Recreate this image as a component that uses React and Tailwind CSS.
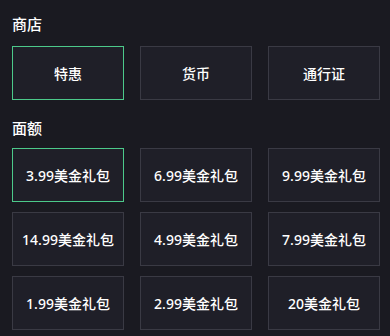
import React, { useState } from 'react';

const TABS = ['特惠', '货币', '通行证'];
const AMOUNTS = [
  '3.99美金礼包', '6.99美金礼包', '9.99美金礼包',
  '14.99美金礼包', '4.99美金礼包', '7.99美金礼包',
  '1.99美金礼包', '2.99美金礼包', '20美金礼包',
];

function Option({ label, active, onClick }) {
  return (
    <button
      onClick={onClick}
      className={`h-[54px] flex items-center justify-center border text-[14px] font-medium text-white bg-[#1f1f28] ${
        active ? 'border-[#4cc98a]' : 'border-[#3a3a44]'
      }`}
    >
      {label}
    </button>
  );
}

export default function App() {
  const [tab, setTab] = useState(0);
  const [amount, setAmount] = useState(0);

  return (
    <div
      className="w-[390px] h-[336px] bg-[#1a1a21] pl-3 pr-[10px] pt-[14px] overflow-hidden"
      style={{ fontFamily: '"Noto Sans", "Noto Sans CJK SC", sans-serif' }}
    >
      {/* Shop */}
      <h2 className="text-[15px] leading-5 font-medium text-white mb-3">商店</h2>
      <div className="grid grid-cols-3 gap-4">
        {TABS.map((t, i) => (
          <Option key={t} label={t} active={tab === i} onClick={() => setTab(i)} />
        ))}
      </div>

      {/* Amount */}
      <h2 className="text-[15px] leading-5 font-medium text-white mt-[18px] mb-[10px]">面额</h2>
      <div className="grid grid-cols-3 gap-x-4 gap-y-[10px]">
        {AMOUNTS.map((a, i) => (
          <Option key={a} label={a} active={amount === i} onClick={() => setAmount(i)} />
        ))}
      </div>
    </div>
  );
}
